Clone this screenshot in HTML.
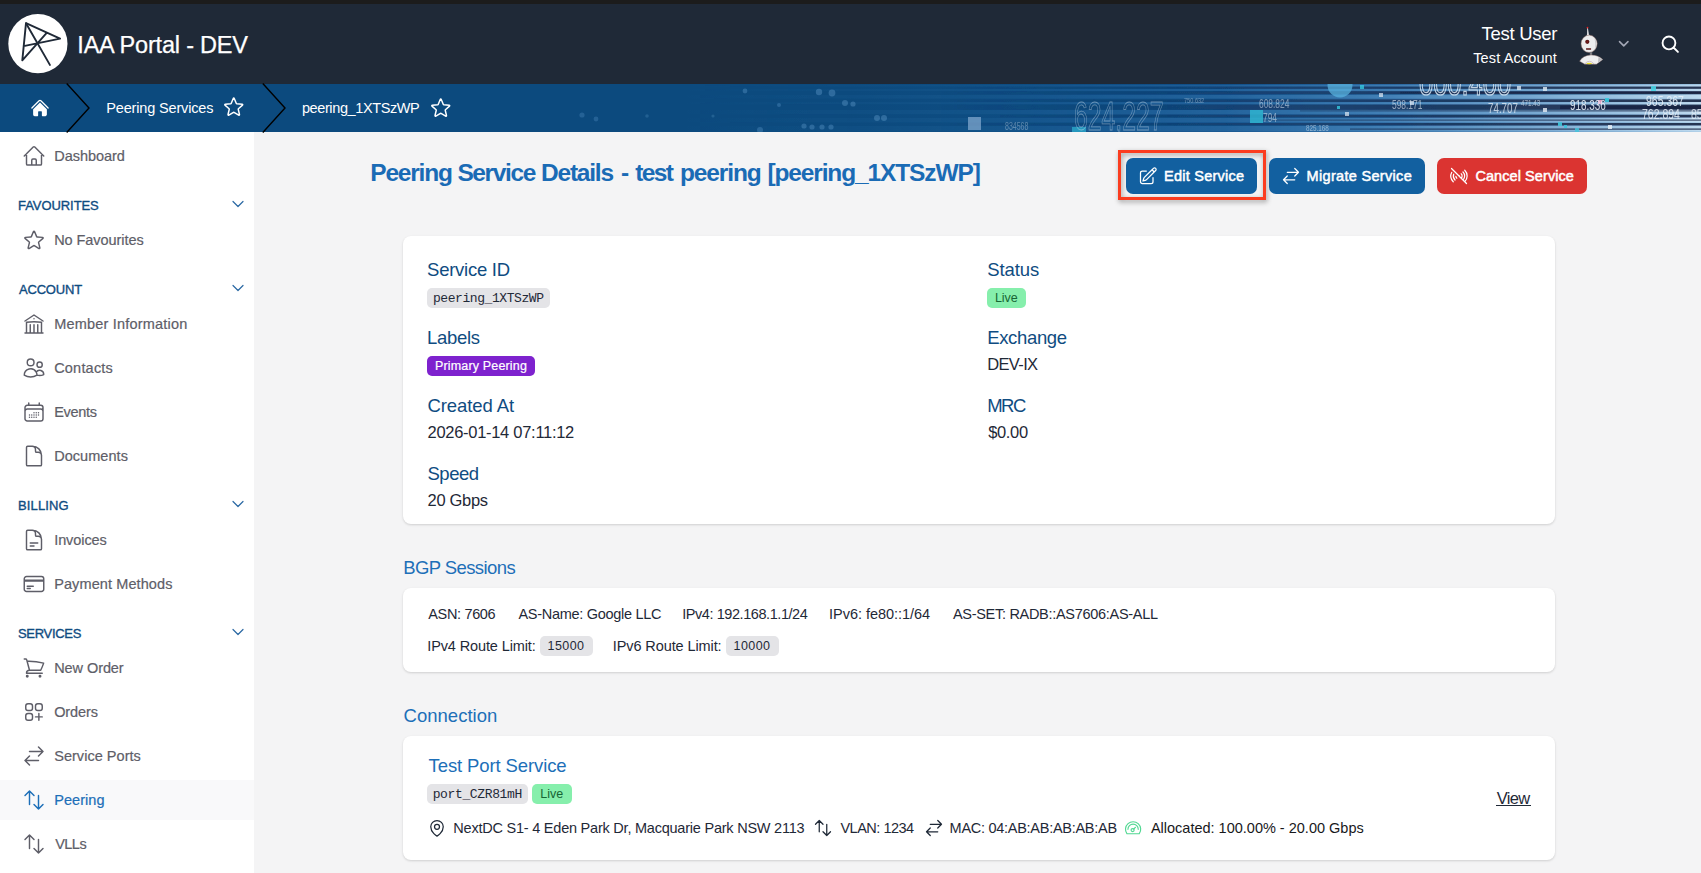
<!DOCTYPE html>
<html><head><meta charset="utf-8"><title>IAA Portal - DEV</title>
<style>
html,body{margin:0;padding:0;}
body{width:1701px;height:873px;overflow:hidden;background:#f4f4f5;font-family:"Liberation Sans",sans-serif;}
#root{position:relative;width:1701px;height:873px;overflow:hidden;}
svg{position:absolute;overflow:visible}
</style></head><body><div id="root">
<div style="position:absolute;left:0px;top:0px;width:1701px;height:4px;background:#1c1c1c"></div>
<div style="position:absolute;left:0px;top:4px;width:1701px;height:80px;background:#1f2937"></div>
<svg style="left:0;top:84px;overflow:hidden" width="1701" height="48" viewBox="0 84 1701 48" preserveAspectRatio="none"><defs><linearGradient id="bg0" gradientUnits="userSpaceOnUse" x1="0" y1="0" x2="1701" y2="0"><stop offset="0" stop-color="#0c4a7e"/><stop offset=".5" stop-color="#0c4a7e"/><stop offset=".6" stop-color="#0e4d83"/><stop offset=".72" stop-color="#12508a"/><stop offset=".82" stop-color="#2c69a2"/><stop offset=".9" stop-color="#5489b9"/><stop offset=".96" stop-color="#7eabd1"/><stop offset="1" stop-color="#a2c6e2"/></linearGradient><linearGradient id="dk" gradientUnits="userSpaceOnUse" x1="0" y1="0" x2="1701" y2="0"><stop offset="0" stop-color="#12284c" stop-opacity="0"/><stop offset=".55" stop-color="#12284c" stop-opacity="0"/><stop offset=".7" stop-color="#12284c" stop-opacity=".3"/><stop offset=".85" stop-color="#14264a" stop-opacity=".75"/><stop offset="1" stop-color="#1a2240" stop-opacity=".9"/></linearGradient><linearGradient id="lt" gradientUnits="userSpaceOnUse" x1="0" y1="0" x2="1701" y2="0"><stop offset="0" stop-color="#4b9ad8" stop-opacity="0"/><stop offset=".4" stop-color="#4b9ad8" stop-opacity="0"/><stop offset=".6" stop-color="#4b9ad8" stop-opacity=".1"/><stop offset=".8" stop-color="#6db0e0" stop-opacity=".3"/><stop offset="1" stop-color="#d4e9f8" stop-opacity=".6"/></linearGradient><filter id="bl" x="-5%" y="-50%" width="110%" height="200%"><feGaussianBlur stdDeviation="0.6"/></filter></defs><rect x="0" y="84" width="1701" height="48" fill="url(#bg0)"/><g filter="url(#bl)"><rect x="500" y="85.2" width="1201" height="1.2" fill="url(#lt)"/><rect x="500" y="89.2" width="1201" height="1.6" fill="url(#lt)"/><rect x="500" y="95" width="1201" height="3.6" fill="url(#lt)"/><rect x="500" y="102.2" width="1201" height="2" fill="url(#lt)"/><rect x="500" y="110" width="1201" height="4.2" fill="url(#lt)"/><rect x="500" y="118" width="1201" height="4.4" fill="url(#lt)"/><rect x="500" y="126" width="1201" height="5.5" fill="url(#lt)"/><rect x="900" y="86.6" width="801" height="2.2" fill="url(#dk)"/><rect x="850" y="91.2" width="851" height="3.0" fill="url(#dk)"/><rect x="950" y="99.4" width="751" height="2.6" fill="url(#dk)"/><rect x="900" y="104.6" width="801" height="5.2" fill="url(#dk)"/><rect x="1000" y="114.8" width="701" height="2.6" fill="url(#dk)"/><rect x="950" y="123" width="751" height="2.4" fill="url(#dk)"/><rect x="1560" y="105.5" width="141" height="3.6" fill="url(#dk)"/><rect x="1400" y="91.8" width="301" height="1.8" fill="url(#dk)"/><rect x="1300" y="110.4" width="401" height="1.0" fill="url(#dk)"/><rect x="1250" y="119.6" width="451" height="1.0" fill="url(#dk)"/><rect x="1350" y="128.5" width="351" height="1.2" fill="url(#dk)"/></g><circle cx="1340" cy="85" r="12.5" fill="#58b2de" opacity=".75"/><rect x="968" y="117" width="13" height="13" fill="#7fa6cc" opacity="0.75"/><rect x="1072" y="127" width="14" height="14" fill="#2aa7c9" opacity="0.8"/><rect x="1250" y="110" width="13" height="13" fill="#2fb4d0" opacity="0.85"/><rect x="1598" y="100" width="4" height="4" fill="#f0a6c8" opacity="0.9"/><rect x="1605" y="98" width="4" height="4" fill="#35c8de" opacity="0.9"/><rect x="1651" y="86" width="5" height="5" fill="#49d3e3" opacity="0.9"/><rect x="1543" y="87" width="4" height="4" fill="#d6e4f0" opacity="0.85"/><rect x="1517" y="86" width="4" height="4" fill="#d6e4f0" opacity="0.8"/><rect x="1543" y="108" width="4" height="4" fill="#e6eef6" opacity="0.8"/><rect x="1558" y="122" width="4" height="4" fill="#41c5dc" opacity="0.9"/><rect x="1608" y="125" width="4" height="4" fill="#e6eef6" opacity="0.85"/><rect x="1575" y="128" width="4" height="4" fill="#41c5dc" opacity="0.8"/><rect x="1410" y="101" width="4" height="4" fill="#dfe9f3" opacity="0.7"/><rect x="1345" y="112" width="4" height="4" fill="#dfe9f3" opacity="0.7"/><rect x="1379" y="93" width="4" height="4" fill="#dfe9f3" opacity="0.7"/><rect x="1337" y="106" width="3" height="3" fill="#35c8de" opacity="0.8"/><rect x="1360" y="85" width="4" height="4" fill="#35c8de" opacity="0.8"/><rect x="1564" y="125" width="3" height="3" fill="#35c8de" opacity="0.8"/><circle cx="745" cy="91" r="2.4" fill="#7db7e6" opacity="0.28"/><circle cx="819" cy="92" r="3.2" fill="#7db7e6" opacity="0.3"/><circle cx="832" cy="93" r="3.4" fill="#7db7e6" opacity="0.3"/><circle cx="845" cy="103" r="3" fill="#7db7e6" opacity="0.3"/><circle cx="853" cy="104" r="2.6" fill="#7db7e6" opacity="0.3"/><circle cx="779" cy="105" r="2" fill="#7db7e6" opacity="0.25"/><circle cx="582" cy="115" r="2.6" fill="#7db7e6" opacity="0.22"/><circle cx="596" cy="119" r="2.4" fill="#7db7e6" opacity="0.22"/><circle cx="647" cy="116" r="1.8" fill="#7db7e6" opacity="0.2"/><circle cx="713" cy="116" r="1.6" fill="#7db7e6" opacity="0.2"/><circle cx="877" cy="118" r="3" fill="#7db7e6" opacity="0.3"/><circle cx="884" cy="118" r="3" fill="#7db7e6" opacity="0.3"/><circle cx="804" cy="126" r="2.6" fill="#7db7e6" opacity="0.28"/><circle cx="812" cy="127" r="2.6" fill="#7db7e6" opacity="0.28"/><circle cx="822" cy="127" r="2.6" fill="#7db7e6" opacity="0.28"/><circle cx="831" cy="127" r="2.6" fill="#7db7e6" opacity="0.28"/><circle cx="760" cy="130" r="3" fill="#7db7e6" opacity="0.25"/><text x="0" y="0" transform="translate(1074 130) scale(0.62 1)" font-family="Liberation Sans, sans-serif" font-size="40" fill="none" stroke="#dbe9f5" stroke-width="0.8" opacity="0.42">624,227</text><text x="0" y="0" transform="translate(1419 95) scale(0.75 1)" font-family="Liberation Sans, sans-serif" font-size="34" fill="none" stroke="#dbe9f5" stroke-width="1.2" opacity="0.85">000.400</text><text transform="translate(1570 110) scale(0.66 1)" font-family="Liberation Sans, sans-serif" font-size="15" fill="#e6eff8" opacity="0.9">918.336</text><text transform="translate(1646 106) scale(0.7 1)" font-family="Liberation Sans, sans-serif" font-size="15" fill="#e6eff8" opacity="0.9">965.367</text><text transform="translate(1642 119) scale(0.7 1)" font-family="Liberation Sans, sans-serif" font-size="15" fill="#e6eff8" opacity="0.85">762.894</text><text transform="translate(1691 119) scale(0.7 1)" font-family="Liberation Sans, sans-serif" font-size="15" fill="#e6eff8" opacity="0.8">85</text><text transform="translate(1488 113) scale(0.7 1)" font-family="Liberation Sans, sans-serif" font-size="14" fill="#e6eff8" opacity="0.75">74.707</text><text transform="translate(1392 109) scale(0.7 1)" font-family="Liberation Sans, sans-serif" font-size="12" fill="#e6eff8" opacity="0.6">598.171</text><text transform="translate(1259 108) scale(0.7 1)" font-family="Liberation Sans, sans-serif" font-size="12" fill="#e6eff8" opacity="0.5">608.824</text><text transform="translate(1263 122) scale(0.7 1)" font-family="Liberation Sans, sans-serif" font-size="12" fill="#e6eff8" opacity="0.5">794</text><text transform="translate(1005 130) scale(0.7 1)" font-family="Liberation Sans, sans-serif" font-size="10" fill="#e6eff8" opacity="0.35">834568</text><text transform="translate(1184 103) scale(0.7 1)" font-family="Liberation Sans, sans-serif" font-size="8" fill="#e6eff8" opacity="0.4">750.632</text><text transform="translate(1306 131) scale(0.7 1)" font-family="Liberation Sans, sans-serif" font-size="9" fill="#e6eff8" opacity="0.5">825.168</text><text transform="translate(1521 106) scale(0.7 1)" font-family="Liberation Sans, sans-serif" font-size="9" fill="#e6eff8" opacity="0.6">471.43</text></svg>
<div style="position:absolute;left:0px;top:132px;width:254px;height:741px;background:#fff"></div>
<div style="position:absolute;left:0px;top:780px;width:254px;height:40px;background:#f9f9fa"></div>
<svg style="left:9px;top:15px" width="58" height="58" viewBox="9 15 58 58"><circle cx="37.9" cy="43.7" r="29.6" fill="#fff"/><g stroke="#1f2937" stroke-width="1.9" stroke-linecap="round" stroke-linejoin="round" fill="none"><path d="M23.6 46.1 L60.1 38.6 L26 23.2 L22.3 60.3 L46.7 32.9"/><path d="M26 23.2 L49.9 64.9"/></g></svg>
<svg style="left:1617.3px;top:36.95px" width="13.5" height="13.5" viewBox="0 0 24 24" fill="none" stroke="#a3a7b5" stroke-width="2.8" stroke-linecap="round" stroke-linejoin="round"><path d="m19.5 8.25-7.5 7.5-7.5-7.5"/></svg>
<svg style="left:1659.75px;top:33.85px" width="20.5" height="20.5" viewBox="0 0 24 24" fill="none" stroke="#fff" stroke-width="2.2" stroke-linecap="round" stroke-linejoin="round"><path d="m21 21-5.197-5.197m0 0A7.5 7.5 0 1 0 5.196 5.196a7.5 7.5 0 0 0 10.607 10.607Z"/></svg>
<svg style="left:1578px;top:25px" width="27" height="41" viewBox="1578 25 27 41"><path d="M1587.2 28 L1587.9 28 L1588.9 34.5 L1590.2 36 L1586.6 36 L1587.1 34 Z" fill="#e9e9ea"/><circle cx="1587.5" cy="27.6" r="0.9" fill="#e02020"/><ellipse cx="1589.1" cy="43.8" rx="8.1" ry="8.7" fill="#ededee" stroke="#7a5a55" stroke-width=".5"/><path d="M1594.5 37.5 Q1598 43 1594.8 50 Q1596 44 1594.5 37.5Z" fill="#c9c9cc"/><circle cx="1587.3" cy="41.8" r="2.1" fill="#5c1616"/><circle cx="1587.3" cy="41.8" r="0.9" fill="#7a1c1c"/><rect x="1586" y="48.2" width="5.1" height="1.5" rx=".4" fill="#5c1616"/><rect x="1589.8" y="52.2" width="2.4" height="4.8" fill="#7d7d82"/><path d="M1579.6 61.2 Q1583 55.2 1591 55 Q1599 55.2 1602.8 59.6 L1596.5 64.2 L1584.8 64.2 Z" fill="#efeff0" stroke="#7a5a55" stroke-width=".4"/><path d="M1598.5 57 L1602.6 59.6 L1598 62.6 Z" fill="#b9b9bd"/><path d="M1584.6 64 Q1589.3 58.5 1594.2 64" fill="none" stroke="#b79c97" stroke-width=".5"/><ellipse cx="1589.2" cy="63.5" rx="2.8" ry=".8" fill="#e8dc2a"/></svg>
<svg style="left:0;top:84px" width="600" height="48" viewBox="0 84 600 48" fill="none" stroke="#000" stroke-width="1.4"><path d="M66.7 83.5 L89 108 L66.7 132.5"/><path d="M262.8 83.5 L285 108 L262.8 132.5"/></svg>
<svg style="left:30px;top:98px" width="20" height="20" viewBox="0 0 24 24" fill="#fff"><path d="M11.47 3.841a.75.75 0 0 1 1.06 0l8.69 8.69a.75.75 0 1 0 1.06-1.061l-8.689-8.69a2.25 2.25 0 0 0-3.182 0l-8.69 8.69a.75.75 0 1 0 1.061 1.06l8.69-8.689Z"/><path d="m12 5.432 8.159 8.159c.03.03.06.058.091.086v6.198c0 1.035-.84 1.875-1.875 1.875H15a.75.75 0 0 1-.75-.75v-4.5a.75.75 0 0 0-.75-.75h-3a.75.75 0 0 0-.75.75V21a.75.75 0 0 1-.75.75H5.625a1.875 1.875 0 0 1-1.875-1.875v-6.198a2.29 2.29 0 0 0 .091-.086L12 5.432Z"/></svg>
<svg style="left:221.9px;top:95.3px" width="23.5" height="23.5" viewBox="0 0 24 24" fill="none" stroke="#fff" stroke-width="1.5" stroke-linecap="round" stroke-linejoin="round"><path d="M11.48 3.499a.562.562 0 0 1 1.04 0l2.125 5.111a.563.563 0 0 0 .475.345l5.518.442c.499.04.701.663.321.988l-4.204 3.602a.563.563 0 0 0-.182.557l1.285 5.385a.562.562 0 0 1-.84.61l-4.725-2.885a.562.562 0 0 0-.586 0L6.982 20.54a.562.562 0 0 1-.84-.61l1.285-5.386a.562.562 0 0 0-.182-.557l-4.204-3.602a.562.562 0 0 1 .321-.988l5.518-.442a.563.563 0 0 0 .475-.345L11.48 3.5Z"/></svg>
<svg style="left:429.3px;top:95.5px" width="23.5" height="23.5" viewBox="0 0 24 24" fill="none" stroke="#fff" stroke-width="1.5" stroke-linecap="round" stroke-linejoin="round"><path d="M11.48 3.499a.562.562 0 0 1 1.04 0l2.125 5.111a.563.563 0 0 0 .475.345l5.518.442c.499.04.701.663.321.988l-4.204 3.602a.563.563 0 0 0-.182.557l1.285 5.385a.562.562 0 0 1-.84.61l-4.725-2.885a.562.562 0 0 0-.586 0L6.982 20.54a.562.562 0 0 1-.84-.61l1.285-5.386a.562.562 0 0 0-.182-.557l-4.204-3.602a.562.562 0 0 1 .321-.988l5.518-.442a.563.563 0 0 0 .475-.345L11.48 3.5Z"/></svg>
<svg style="left:22px;top:144px" width="24" height="24" viewBox="0 0 24 24" fill="none" stroke="#5e5e68" stroke-width="1.45" stroke-linecap="round" stroke-linejoin="round"><path d="m2.25 12 8.954-8.955c.44-.439 1.152-.439 1.591 0L21.75 12M4.5 9.75v10.125c0 .621.504 1.125 1.125 1.125H9.75v-4.875c0-.621.504-1.125 1.125-1.125h2.25c.621 0 1.125.504 1.125 1.125V21h4.125c.621 0 1.125-.504 1.125-1.125V9.75M8.25 21h8.25"/></svg>
<svg style="left:230.1px;top:196.05px" width="16" height="16" viewBox="0 0 24 24" fill="none" stroke="#2a68a3" stroke-width="1.8" stroke-linecap="round" stroke-linejoin="round"><path d="m19.5 8.25-7.5 7.5-7.5-7.5"/></svg>
<svg style="left:22px;top:228px" width="24" height="24" viewBox="0 0 24 24" fill="none" stroke="#5e5e68" stroke-width="1.45" stroke-linecap="round" stroke-linejoin="round"><path d="M11.48 3.499a.562.562 0 0 1 1.04 0l2.125 5.111a.563.563 0 0 0 .475.345l5.518.442c.499.04.701.663.321.988l-4.204 3.602a.563.563 0 0 0-.182.557l1.285 5.385a.562.562 0 0 1-.84.61l-4.725-2.885a.562.562 0 0 0-.586 0L6.982 20.54a.562.562 0 0 1-.84-.61l1.285-5.386a.562.562 0 0 0-.182-.557l-4.204-3.602a.562.562 0 0 1 .321-.988l5.518-.442a.563.563 0 0 0 .475-.345L11.48 3.5Z"/></svg>
<svg style="left:230.1px;top:280.05px" width="16" height="16" viewBox="0 0 24 24" fill="none" stroke="#2a68a3" stroke-width="1.8" stroke-linecap="round" stroke-linejoin="round"><path d="m19.5 8.25-7.5 7.5-7.5-7.5"/></svg>
<svg style="left:22px;top:312px" width="24" height="24" viewBox="0 0 24 24" fill="none" stroke="#5e5e68" stroke-width="1.45" stroke-linecap="round" stroke-linejoin="round"><path d="M12 21v-8.25M15.75 21v-8.25M8.25 21v-8.25M3 9l9-6 9 6m-1.5 12V10.332A48.36 48.36 0 0 0 12 9.75c-2.551 0-5.056.2-7.5.582V21M3 21h18M12 6.75h.008v.008H12V6.75Z"/></svg>
<svg style="left:22px;top:356px" width="24" height="24" viewBox="0 0 24 24" fill="none" stroke="#5e5e68" stroke-width="1.45" stroke-linecap="round" stroke-linejoin="round"><path d="M15 19.128a9.38 9.38 0 0 0 2.625.372 9.337 9.337 0 0 0 4.121-.952 4.125 4.125 0 0 0-7.533-2.493M15 19.128v-.003c0-1.113-.285-2.16-.786-3.07M15 19.128v.106A12.318 12.318 0 0 1 8.624 21c-2.331 0-4.512-.645-6.374-1.766l-.001-.109a6.375 6.375 0 0 1 11.964-3.07M12 6.375a3.375 3.375 0 1 1-6.75 0 3.375 3.375 0 0 1 6.75 0Zm8.25 2.25a2.625 2.625 0 1 1-5.25 0 2.625 2.625 0 0 1 5.25 0Z"/></svg>
<svg style="left:22px;top:400px" width="24" height="24" viewBox="0 0 24 24" fill="none" stroke="#5e5e68" stroke-width="1.45" stroke-linecap="round" stroke-linejoin="round"><path d="M6.75 3v2.25M17.25 3v2.25M3 18.75V7.5a2.25 2.25 0 0 1 2.25-2.25h13.5A2.25 2.25 0 0 1 21 7.5v11.25m-18 0A2.25 2.25 0 0 0 5.25 21h13.5A2.25 2.25 0 0 0 21 18.75m-18 0v-7.5A2.25 2.25 0 0 1 5.25 9h13.5A2.25 2.25 0 0 1 21 11.25v7.5m-9-6h.008v.008H12v-.008ZM12 15h.008v.008H12V15Zm0 2.25h.008v.008H12v-.008ZM9.75 15h.008v.008H9.75V15Zm0 2.25h.008v.008H9.75v-.008ZM7.5 15h.008v.008H7.5V15Zm0 2.25h.008v.008H7.5v-.008Zm6.75-4.5h.008v.008h-.008v-.008Zm0 2.25h.008v.008h-.008V15Zm0 2.25h.008v.008h-.008v-.008Zm2.25-4.5h.008v.008H16.5v-.008Zm0 2.25h.008v.008H16.5V15Z"/></svg>
<svg style="left:22px;top:444px" width="24" height="24" viewBox="0 0 24 24" fill="none" stroke="#5e5e68" stroke-width="1.45" stroke-linecap="round" stroke-linejoin="round"><path d="M19.5 14.25v-2.625a3.375 3.375 0 0 0-3.375-3.375h-1.5A1.125 1.125 0 0 1 13.5 7.125v-1.5a3.375 3.375 0 0 0-3.375-3.375H8.25m2.25 0H5.625c-.621 0-1.125.504-1.125 1.125v17.25c0 .621.504 1.125 1.125 1.125h12.75c.621 0 1.125-.504 1.125-1.125V11.25a9 9 0 0 0-9-9Z"/></svg>
<svg style="left:230.1px;top:496.05px" width="16" height="16" viewBox="0 0 24 24" fill="none" stroke="#2a68a3" stroke-width="1.8" stroke-linecap="round" stroke-linejoin="round"><path d="m19.5 8.25-7.5 7.5-7.5-7.5"/></svg>
<svg style="left:22px;top:528px" width="24" height="24" viewBox="0 0 24 24" fill="none" stroke="#5e5e68" stroke-width="1.45" stroke-linecap="round" stroke-linejoin="round"><path d="M19.5 14.25v-2.625a3.375 3.375 0 0 0-3.375-3.375h-1.5A1.125 1.125 0 0 1 13.5 7.125v-1.5a3.375 3.375 0 0 0-3.375-3.375H8.25m0 12.75h7.5m-7.5 3H12M10.5 2.25H5.625c-.621 0-1.125.504-1.125 1.125v17.25c0 .621.504 1.125 1.125 1.125h12.75c.621 0 1.125-.504 1.125-1.125V11.25a9 9 0 0 0-9-9Z"/></svg>
<svg style="left:22px;top:572px" width="24" height="24" viewBox="0 0 24 24" fill="none" stroke="#5e5e68" stroke-width="1.45" stroke-linecap="round" stroke-linejoin="round"><path d="M2.25 8.25h19.5M2.25 9h19.5m-16.5 5.25h6m-6 2.25h3m-3.75 3h15a2.25 2.25 0 0 0 2.25-2.25V6.75A2.25 2.25 0 0 0 19.5 4.5h-15a2.25 2.25 0 0 0-2.25 2.25v10.5A2.25 2.25 0 0 0 4.5 19.5Z"/></svg>
<svg style="left:230.1px;top:624.05px" width="16" height="16" viewBox="0 0 24 24" fill="none" stroke="#2a68a3" stroke-width="1.8" stroke-linecap="round" stroke-linejoin="round"><path d="m19.5 8.25-7.5 7.5-7.5-7.5"/></svg>
<svg style="left:22px;top:656px" width="24" height="24" viewBox="0 0 24 24" fill="none" stroke="#5e5e68" stroke-width="1.45" stroke-linecap="round" stroke-linejoin="round"><path d="M2.25 3h1.386c.51 0 .955.343 1.087.835l.383 1.437M7.5 14.25a3 3 0 0 0-3 3h15.75m-12.75-3h11.218c1.121-2.3 2.1-4.684 2.924-7.138a60.114 60.114 0 0 0-16.536-1.84M7.5 14.25 5.106 5.272M6 20.25a.75.75 0 1 1-1.5 0 .75.75 0 0 1 1.5 0Zm12.75 0a.75.75 0 1 1-1.5 0 .75.75 0 0 1 1.5 0Z"/></svg>
<svg style="left:22px;top:700px" width="24" height="24" viewBox="0 0 24 24" fill="none" stroke="#5e5e68" stroke-width="1.45" stroke-linecap="round" stroke-linejoin="round"><path d="M13.5 16.875h3.375m0 0h3.375m-3.375 0V13.5m0 3.375v3.375M6 10.5h2.25a2.25 2.25 0 0 0 2.25-2.25V6a2.25 2.25 0 0 0-2.25-2.25H6A2.25 2.25 0 0 0 3.75 6v2.25A2.25 2.25 0 0 0 6 10.5Zm0 9.75h2.25A2.25 2.25 0 0 0 10.5 18v-2.25a2.25 2.25 0 0 0-2.25-2.25H6a2.25 2.25 0 0 0-2.25 2.25V18A2.25 2.25 0 0 0 6 20.25Zm9.75-9.75H18a2.25 2.25 0 0 0 2.25-2.25V6A2.25 2.25 0 0 0 18 3.75h-2.25A2.25 2.25 0 0 0 13.5 6v2.25a2.25 2.25 0 0 0 2.25 2.25Z"/></svg>
<svg style="left:22px;top:744px" width="24" height="24" viewBox="0 0 24 24" fill="none" stroke="#5e5e68" stroke-width="1.45" stroke-linecap="round" stroke-linejoin="round"><path d="M7.5 21 3 16.5m0 0L7.5 12M3 16.5h13.5m0-13.5L21 7.5m0 0L16.5 12M21 7.5H7.5"/></svg>
<svg style="left:22px;top:788px" width="24" height="24" viewBox="0 0 24 24" fill="none" stroke="#1d6fb8" stroke-width="1.45" stroke-linecap="round" stroke-linejoin="round"><path d="M3 7.5 7.5 3m0 0L12 7.5M7.5 3v13.5m13.5 0L16.5 21m0 0L12 16.5m4.5 4.5V7.5"/></svg>
<svg style="left:22px;top:832px" width="24" height="24" viewBox="0 0 24 24" fill="none" stroke="#5e5e68" stroke-width="1.45" stroke-linecap="round" stroke-linejoin="round"><path d="M3 7.5 7.5 3m0 0L12 7.5M7.5 3v13.5m13.5 0L16.5 21m0 0L12 16.5m4.5 4.5V7.5"/></svg>
<div style="position:absolute;left:1118px;top:150px;width:142px;height:44px;border:3px solid #fb3c1f;filter:drop-shadow(1px 2px 2.5px rgba(0,0,0,.38))"></div>
<div style="position:absolute;left:1126px;top:158px;width:131px;height:36px;background:#1260a0;border-radius:7px"></div>
<div style="position:absolute;left:1269px;top:158px;width:156px;height:36px;background:#1260a0;border-radius:7px"></div>
<div style="position:absolute;left:1437px;top:158px;width:150px;height:36px;background:#db3431;border-radius:7px"></div>
<svg style="left:1138px;top:165.5px" width="20" height="20" viewBox="0 0 24 24" fill="none" stroke="#fff" stroke-width="1.5" stroke-linecap="round" stroke-linejoin="round"><path d="m16.862 4.487 1.687-1.688a1.875 1.875 0 1 1 2.652 2.652L10.582 16.07a4.5 4.5 0 0 1-1.897 1.13L6 18l.8-2.685a4.5 4.5 0 0 1 1.13-1.897l8.932-8.931Zm0 0L19.5 7.125M18 14v4.75A2.25 2.25 0 0 1 15.75 21H5.25A2.25 2.25 0 0 1 3 18.75V8.25A2.25 2.25 0 0 1 5.25 6H10"/></svg>
<svg style="left:1281px;top:166px" width="20" height="20" viewBox="0 0 24 24" fill="none" stroke="#fff" stroke-width="1.5" stroke-linecap="round" stroke-linejoin="round"><path d="M7.5 21 3 16.5m0 0L7.5 12M3 16.5h13.5m0-13.5L21 7.5m0 0L16.5 12M21 7.5H7.5"/></svg>
<svg style="left:1449px;top:166px" width="20" height="20" viewBox="0 0 24 24" fill="none" stroke="#fff" stroke-width="1.5" stroke-linecap="round" stroke-linejoin="round"><path d="m3 3 8.735 8.735m0 0a.374.374 0 1 1 .53.53m-.53-.53.53.53m0 0L21 21M14.652 9.348a3.75 3.75 0 0 1 0 5.304m2.121-7.425a6.75 6.75 0 0 1 0 9.546m2.121-11.667c3.808 3.807 3.808 9.98 0 13.788m-9.546-4.242a3.733 3.733 0 0 1-1.06-2.122m-1.061 4.243a6.75 6.75 0 0 1-1.625-6.929m-.496 9.05c-3.068-3.067-3.664-7.67-1.79-11.334M12 12h.008v.008H12V12Z"/></svg>
<div style="position:absolute;left:403px;top:236px;width:1152px;height:287.5px;background:#fff;border-radius:8px;box-shadow:0 1px 3px rgba(0,0,0,.10),0 1px 2px rgba(0,0,0,.06)"></div>
<div style="position:absolute;left:403px;top:588px;width:1152px;height:84px;background:#fff;border-radius:8px;box-shadow:0 1px 3px rgba(0,0,0,.10),0 1px 2px rgba(0,0,0,.06)"></div>
<div style="position:absolute;left:403px;top:736px;width:1152px;height:123.5px;background:#fff;border-radius:8px;box-shadow:0 1px 3px rgba(0,0,0,.10),0 1px 2px rgba(0,0,0,.06)"></div>
<div style="position:absolute;left:427px;top:288px;width:123px;height:19.8px;background:#e4e4e7;border-radius:5px"></div>
<div style="position:absolute;left:427px;top:356px;width:108px;height:19.9px;background:#7e22ce;border-radius:5px"></div>
<div style="position:absolute;left:987px;top:288px;width:39px;height:19.8px;background:#86efac;border-radius:5px"></div>
<div style="position:absolute;left:540px;top:636px;width:52.8px;height:19.8px;background:#e4e4e7;border-radius:5px"></div>
<div style="position:absolute;left:726.1px;top:636px;width:52.8px;height:19.8px;background:#e4e4e7;border-radius:5px"></div>
<div style="position:absolute;left:427px;top:784.2px;width:100.8px;height:19.7px;background:#e4e4e7;border-radius:5px"></div>
<div style="position:absolute;left:532px;top:784.2px;width:40px;height:19.7px;background:#86efac;border-radius:5px"></div>
<svg style="left:426.8px;top:817.8px" width="20" height="20" viewBox="0 0 24 24" fill="none" stroke="#1f2937" stroke-width="1.5" stroke-linecap="round" stroke-linejoin="round"><path d="M15 10.5a3 3 0 1 1-6 0 3 3 0 0 1 6 0Z M19.5 10.5c0 7.142-7.5 11.25-7.5 11.25S4.5 17.642 4.5 10.5a7.5 7.5 0 1 1 15 0Z"/></svg>
<svg style="left:813.2px;top:817.9px" width="20" height="20" viewBox="0 0 24 24" fill="none" stroke="#1f2937" stroke-width="1.5" stroke-linecap="round" stroke-linejoin="round"><path d="M3 7.5 7.5 3m0 0L12 7.5M7.5 3v13.5m13.5 0L16.5 21m0 0L12 16.5m4.5 4.5V7.5"/></svg>
<svg style="left:923.8px;top:818px" width="20" height="20" viewBox="0 0 24 24" fill="none" stroke="#1f2937" stroke-width="1.5" stroke-linecap="round" stroke-linejoin="round"><path d="M7.5 21 3 16.5m0 0L7.5 12M3 16.5h13.5m0-13.5L21 7.5m0 0L16.5 12M21 7.5H7.5"/></svg>
<svg style="left:1124px;top:820px" width="18" height="16" viewBox="0 0 18 16" fill="none" stroke="#52d893" stroke-width="1.15" stroke-linecap="round" stroke-linejoin="round"><path d="M2.9 13.7 A7.6 7.6 0 1 1 15.3 13.7 Z"/><path d="M3.95 9.3 A5.15 5.15 0 0 1 14.25 9.3"/><circle cx="8.6" cy="10.1" r="1.55"/><path d="M9.7 9 L11.4 7.3"/></svg>
<div style="position:absolute;left:1496px;top:805px;width:35px;height:1.2px;background:#1f2937"></div>
<span style="position:absolute;white-space:pre;left:77.30px;top:34px;font:400 23.5px/1 'Liberation Sans', sans-serif;color:#fff;letter-spacing:-0.200px;-webkit-text-stroke:0.25px #fff;">IAA Portal - DEV</span>
<span style="position:absolute;white-space:pre;left:1481.60px;top:25px;font:400 18.5px/1 'Liberation Sans', sans-serif;color:#fff;letter-spacing:-0.300px;">Test User</span>
<span style="position:absolute;white-space:pre;left:1473.20px;top:51px;font:400 14.5px/1 'Liberation Sans', sans-serif;color:#fff;letter-spacing:0.127px;">Test Account</span>
<span style="position:absolute;white-space:pre;left:106.30px;top:101px;font:400 14.5px/1 'Liberation Sans', sans-serif;color:#fff;letter-spacing:-0.160px;">Peering Services</span>
<span style="position:absolute;white-space:pre;left:301.90px;top:101px;font:400 14.5px/1 'Liberation Sans', sans-serif;color:#fff;letter-spacing:-0.386px;">peering_1XTSzWP</span>
<span style="position:absolute;white-space:pre;left:54.20px;top:149px;font:400 14.5px/1 'Liberation Sans', sans-serif;color:#5e5e68;letter-spacing:-0.025px;-webkit-text-stroke:0.2px #5e5e68;">Dashboard</span>
<span style="position:absolute;white-space:pre;left:18.00px;top:199px;font:400 13px/1 'Liberation Sans', sans-serif;color:#0f4c81;letter-spacing:-0.067px;-webkit-text-stroke:0.35px #0f4c81;">FAVOURITES</span>
<span style="position:absolute;white-space:pre;left:54.20px;top:233px;font:400 14.5px/1 'Liberation Sans', sans-serif;color:#5e5e68;letter-spacing:-0.067px;-webkit-text-stroke:0.2px #5e5e68;">No Favourites</span>
<span style="position:absolute;white-space:pre;left:19.00px;top:283px;font:400 13px/1 'Liberation Sans', sans-serif;color:#0f4c81;letter-spacing:-0.200px;-webkit-text-stroke:0.35px #0f4c81;">ACCOUNT</span>
<span style="position:absolute;white-space:pre;left:54.20px;top:317px;font:400 14.5px/1 'Liberation Sans', sans-serif;color:#5e5e68;letter-spacing:0.200px;-webkit-text-stroke:0.2px #5e5e68;">Member Information</span>
<span style="position:absolute;white-space:pre;left:54.20px;top:361px;font:400 14.5px/1 'Liberation Sans', sans-serif;color:#5e5e68;letter-spacing:0.200px;-webkit-text-stroke:0.2px #5e5e68;">Contacts</span>
<span style="position:absolute;white-space:pre;left:54.20px;top:405px;font:400 14.5px/1 'Liberation Sans', sans-serif;color:#5e5e68;letter-spacing:-0.320px;-webkit-text-stroke:0.2px #5e5e68;">Events</span>
<span style="position:absolute;white-space:pre;left:54.20px;top:449px;font:400 14.5px/1 'Liberation Sans', sans-serif;color:#5e5e68;letter-spacing:0.050px;-webkit-text-stroke:0.2px #5e5e68;">Documents</span>
<span style="position:absolute;white-space:pre;left:18.00px;top:499px;font:400 13px/1 'Liberation Sans', sans-serif;color:#0f4c81;letter-spacing:0.133px;-webkit-text-stroke:0.35px #0f4c81;">BILLING</span>
<span style="position:absolute;white-space:pre;left:54.20px;top:533px;font:400 14.5px/1 'Liberation Sans', sans-serif;color:#5e5e68;letter-spacing:-0.086px;-webkit-text-stroke:0.2px #5e5e68;">Invoices</span>
<span style="position:absolute;white-space:pre;left:54.20px;top:577px;font:400 14.5px/1 'Liberation Sans', sans-serif;color:#5e5e68;letter-spacing:0.100px;-webkit-text-stroke:0.2px #5e5e68;">Payment Methods</span>
<span style="position:absolute;white-space:pre;left:18.00px;top:627px;font:400 13px/1 'Liberation Sans', sans-serif;color:#0f4c81;letter-spacing:-0.314px;-webkit-text-stroke:0.35px #0f4c81;">SERVICES</span>
<span style="position:absolute;white-space:pre;left:54.20px;top:661px;font:400 14.5px/1 'Liberation Sans', sans-serif;color:#5e5e68;letter-spacing:-0.075px;-webkit-text-stroke:0.2px #5e5e68;">New Order</span>
<span style="position:absolute;white-space:pre;left:54.20px;top:705px;font:400 14.5px/1 'Liberation Sans', sans-serif;color:#5e5e68;letter-spacing:-0.120px;-webkit-text-stroke:0.2px #5e5e68;">Orders</span>
<span style="position:absolute;white-space:pre;left:54.20px;top:749px;font:400 14.5px/1 'Liberation Sans', sans-serif;color:#5e5e68;letter-spacing:0.033px;-webkit-text-stroke:0.2px #5e5e68;">Service Ports</span>
<span style="position:absolute;white-space:pre;left:54.20px;top:793px;font:400 14.5px/1 'Liberation Sans', sans-serif;color:#1d6fb8;letter-spacing:0.067px;-webkit-text-stroke:0.2px #1d6fb8;">Peering</span>
<span style="position:absolute;white-space:pre;left:55.20px;top:837px;font:400 14.5px/1 'Liberation Sans', sans-serif;color:#5e5e68;letter-spacing:-0.533px;-webkit-text-stroke:0.2px #5e5e68;">VLLs</span>
<span style="position:absolute;white-space:pre;left:370.30px;top:161px;font:700 24.5px/1 'Liberation Sans', sans-serif;color:#1a6bb5;letter-spacing:-1.200px;">Peering</span>
<span style="position:absolute;white-space:pre;left:457.40px;top:161px;font:700 24.5px/1 'Liberation Sans', sans-serif;color:#1a6bb5;letter-spacing:-1.367px;">Service</span>
<span style="position:absolute;white-space:pre;left:541.10px;top:161px;font:700 24.5px/1 'Liberation Sans', sans-serif;color:#1a6bb5;letter-spacing:-1.233px;">Details</span>
<span style="position:absolute;white-space:pre;left:621.10px;top:161px;font:700 24.5px/1 'Liberation Sans', sans-serif;color:#1a6bb5;">-</span>
<span style="position:absolute;white-space:pre;left:635.20px;top:161px;font:700 24.5px/1 'Liberation Sans', sans-serif;color:#1a6bb5;letter-spacing:-1.600px;">test</span>
<span style="position:absolute;white-space:pre;left:679.90px;top:161px;font:700 24.5px/1 'Liberation Sans', sans-serif;color:#1a6bb5;letter-spacing:-1.100px;">peering</span>
<span style="position:absolute;white-space:pre;left:767.40px;top:161px;font:700 24.5px/1 'Liberation Sans', sans-serif;color:#1a6bb5;letter-spacing:-1.125px;">[peering_1XTSzWP]</span>
<span style="position:absolute;white-space:pre;left:1164.10px;top:169px;font:400 14.5px/1 'Liberation Sans', sans-serif;color:#fff;letter-spacing:0.236px;-webkit-text-stroke:0.5px #fff;">Edit Service</span>
<span style="position:absolute;white-space:pre;left:1306.60px;top:169px;font:400 14.5px/1 'Liberation Sans', sans-serif;color:#fff;letter-spacing:0.314px;-webkit-text-stroke:0.5px #fff;">Migrate Service</span>
<span style="position:absolute;white-space:pre;left:1475.40px;top:169px;font:400 14.5px/1 'Liberation Sans', sans-serif;color:#fff;letter-spacing:0.077px;-webkit-text-stroke:0.5px #fff;">Cancel Service</span>
<span style="position:absolute;white-space:pre;left:427.10px;top:261px;font:400 18.5px/1 'Liberation Sans', sans-serif;color:#0f4c81;letter-spacing:-0.267px;">Service ID</span>
<span style="position:absolute;white-space:pre;left:433.00px;top:292px;font:400 13px/1 'Liberation Mono', monospace;color:#1f2937;letter-spacing:-0.429px;">peering_1XTSzWP</span>
<span style="position:absolute;white-space:pre;left:427.10px;top:329px;font:400 18.5px/1 'Liberation Sans', sans-serif;color:#0f4c81;letter-spacing:-0.320px;">Labels</span>
<span style="position:absolute;white-space:pre;left:434.90px;top:360px;font:400 12.5px/1 'Liberation Sans', sans-serif;color:#fff;letter-spacing:0.171px;-webkit-text-stroke:0.2px #fff;">Primary Peering</span>
<span style="position:absolute;white-space:pre;left:427.50px;top:397px;font:400 18.5px/1 'Liberation Sans', sans-serif;color:#0f4c81;letter-spacing:-0.089px;">Created At</span>
<span style="position:absolute;white-space:pre;left:427.50px;top:424px;font:400 16.5px/1 'Liberation Sans', sans-serif;color:#1f2937;letter-spacing:-0.289px;">2026-01-14 07:11:12</span>
<span style="position:absolute;white-space:pre;left:427.50px;top:465px;font:400 18.5px/1 'Liberation Sans', sans-serif;color:#0f4c81;letter-spacing:-0.500px;">Speed</span>
<span style="position:absolute;white-space:pre;left:427.50px;top:492px;font:400 16.5px/1 'Liberation Sans', sans-serif;color:#1f2937;letter-spacing:-0.300px;">20 Gbps</span>
<span style="position:absolute;white-space:pre;left:987.20px;top:261px;font:400 18.5px/1 'Liberation Sans', sans-serif;color:#0f4c81;letter-spacing:-0.080px;">Status</span>
<span style="position:absolute;white-space:pre;left:994.90px;top:292px;font:400 12.5px/1 'Liberation Sans', sans-serif;color:#166534;">Live</span>
<span style="position:absolute;white-space:pre;left:987.20px;top:329px;font:400 18.5px/1 'Liberation Sans', sans-serif;color:#0f4c81;letter-spacing:-0.343px;">Exchange</span>
<span style="position:absolute;white-space:pre;left:987.20px;top:356px;font:400 16.5px/1 'Liberation Sans', sans-serif;color:#1f2937;letter-spacing:-0.640px;">DEV-IX</span>
<span style="position:absolute;white-space:pre;left:987.20px;top:397px;font:400 18.5px/1 'Liberation Sans', sans-serif;color:#0f4c81;letter-spacing:-1.500px;">MRC</span>
<span style="position:absolute;white-space:pre;left:988.20px;top:424px;font:400 16.5px/1 'Liberation Sans', sans-serif;color:#1f2937;letter-spacing:-0.350px;">$0.00</span>
<span style="position:absolute;white-space:pre;left:403.30px;top:559px;font:400 18.5px/1 'Liberation Sans', sans-serif;color:#1d6fb8;letter-spacing:-0.600px;">BGP Sessions</span>
<span style="position:absolute;white-space:pre;left:428.30px;top:607px;font:400 14.5px/1 'Liberation Sans', sans-serif;color:#1f2937;letter-spacing:-0.350px;">ASN: 7606</span>
<span style="position:absolute;white-space:pre;left:518.40px;top:607px;font:400 14.5px/1 'Liberation Sans', sans-serif;color:#1f2937;letter-spacing:-0.289px;">AS-Name: Google LLC</span>
<span style="position:absolute;white-space:pre;left:682.20px;top:607px;font:400 14.5px/1 'Liberation Sans', sans-serif;color:#1f2937;letter-spacing:-0.432px;">IPv4: 192.168.1.1/24</span>
<span style="position:absolute;white-space:pre;left:829.10px;top:607px;font:400 14.5px/1 'Liberation Sans', sans-serif;color:#1f2937;letter-spacing:-0.040px;">IPv6: fe80::1/64</span>
<span style="position:absolute;white-space:pre;left:952.90px;top:607px;font:400 14.5px/1 'Liberation Sans', sans-serif;color:#1f2937;letter-spacing:-0.292px;">AS-SET: RADB::AS7606:AS-ALL</span>
<span style="position:absolute;white-space:pre;left:427.30px;top:639px;font:400 14.5px/1 'Liberation Sans', sans-serif;color:#1f2937;letter-spacing:-0.125px;">IPv4 Route Limit:</span>
<span style="position:absolute;white-space:pre;left:547.60px;top:640px;font:400 12.5px/1 'Liberation Sans', sans-serif;color:#1f2937;letter-spacing:0.400px;">15000</span>
<span style="position:absolute;white-space:pre;left:612.80px;top:639px;font:400 14.5px/1 'Liberation Sans', sans-serif;color:#1f2937;letter-spacing:-0.100px;">IPv6 Route Limit:</span>
<span style="position:absolute;white-space:pre;left:733.60px;top:640px;font:400 12.5px/1 'Liberation Sans', sans-serif;color:#1f2937;letter-spacing:0.400px;">10000</span>
<span style="position:absolute;white-space:pre;left:403.50px;top:707px;font:400 18.5px/1 'Liberation Sans', sans-serif;color:#1d6fb8;letter-spacing:0.022px;">Connection</span>
<span style="position:absolute;white-space:pre;left:428.60px;top:757px;font:400 18.5px/1 'Liberation Sans', sans-serif;color:#1d6fb8;letter-spacing:-0.113px;">Test Port Service</span>
<span style="position:absolute;white-space:pre;left:432.70px;top:788px;font:400 13px/1 'Liberation Mono', monospace;color:#1f2937;letter-spacing:-0.364px;">port_CZR81mH</span>
<span style="position:absolute;white-space:pre;left:540.30px;top:788px;font:400 12.5px/1 'Liberation Sans', sans-serif;color:#166534;">Live</span>
<span style="position:absolute;white-space:pre;left:453.35px;top:821px;font:400 14.5px/1 'Liberation Sans', sans-serif;color:#1f2937;letter-spacing:-0.227px;">NextDC S1- 4 Eden Park Dr, Macquarie Park NSW 2113</span>
<span style="position:absolute;white-space:pre;left:840.40px;top:821px;font:400 14.5px/1 'Liberation Sans', sans-serif;color:#1f2937;letter-spacing:-0.489px;">VLAN: 1234</span>
<span style="position:absolute;white-space:pre;left:949.60px;top:821px;font:400 14.5px/1 'Liberation Sans', sans-serif;color:#1f2937;letter-spacing:-0.276px;">MAC: 04:AB:AB:AB:AB:AB</span>
<span style="position:absolute;white-space:pre;left:1150.90px;top:821px;font:400 14.5px/1 'Liberation Sans', sans-serif;color:#18181b;">Allocated: 100.00% - 20.00 Gbps</span>
<span style="position:absolute;white-space:pre;left:1496.80px;top:790px;font:400 16.5px/1 'Liberation Sans', sans-serif;color:#1f2937;letter-spacing:-0.733px;">View</span>
</div></body></html>
